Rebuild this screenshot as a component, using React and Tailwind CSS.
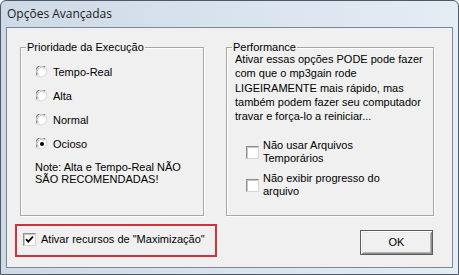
import React from 'react'

function Radio({ checked }) {
  return (
    <svg width="12" height="12" viewBox="0 0 12 12" className="shrink-0">
      <circle cx="6" cy="6" r="5.5" fill="#ffffff" />
      <path d="M1.4 9.3 A5.3 5.3 0 0 1 9.3 1.4" fill="none" stroke="#7a7a7a" strokeWidth="1.1" />
      <path d="M9.3 1.4 A5.3 5.3 0 0 1 1.4 9.3" fill="none" stroke="#d8d8d8" strokeWidth="1.1" />
      <path d="M2.5 8.2 A4 4 0 0 1 8.2 2.5" fill="none" stroke="#bdbdbd" strokeWidth="1" />
      {checked && <circle cx="6" cy="6" r="2" fill="#000000" />}
    </svg>
  )
}

function Checkbox({ checked }) {
  return (
    <div className="w-[13px] h-[13px] shrink-0 bg-white border border-t-[#8e8e8e] border-l-[#8e8e8e] border-r-[#d4d4d4] border-b-[#d4d4d4] shadow-[inset_1px_1px_0_#c8c8c8] flex items-center justify-center">
      {checked && (
        <svg width="9" height="9" viewBox="0 0 9 9">
          <path d="M1 4.2 L3.3 6.6 L8 1.6" fill="none" stroke="#000" strokeWidth="1.8" />
        </svg>
      )}
    </div>
  )
}

function GroupBox({ title, className, children }) {
  return (
    <div className={`relative border border-[#a6a6a6] shadow-[1px_1px_0_#ffffff,inset_1px_1px_0_#ffffff] ${className}`}>
      <span className="absolute -top-[7px] left-[5px] bg-[#f0f0f0] px-[1px] leading-[12px]">{title}</span>
      {children}
    </div>
  )
}

export default function App() {
  const priorities = [
    { label: 'Tempo-Real', checked: false },
    { label: 'Alta', checked: false },
    { label: 'Normal', checked: false },
    { label: 'Ocioso', checked: true },
  ]

  return (
    <div className="w-[459px] h-[275px] flex flex-col rounded-t-[6px] border border-[#4f5865] bg-gradient-to-r from-[#cdd9e6] via-[#d9e3ee] to-[#e4ecf4] text-[11px] text-black font-['Liberation_Sans',sans-serif]">
      {/* Title bar */}
      <div className="h-[26px] shrink-0 pl-[6px] flex items-center text-[12px] text-[#1b1b1b] font-['Open_Sans',sans-serif]">
        Opções Avançadas
      </div>

      {/* Client area */}
      <div className="flex-1 mx-[5px] mb-[6px] border border-[#7d8894] bg-[#f0f0f0] flex flex-col">
        <div className="flex pl-[13px] pt-[19px] gap-[22px]">
          <GroupBox title="Prioridade da Execução" className="w-[184px] h-[169px]">
            <div className="flex flex-col pt-[12px] pl-[15px]">
              {priorities.map((p) => (
                <div key={p.label} className="h-[24px] flex items-center gap-[5px]">
                  <Radio checked={p.checked} />
                  <span>{p.label}</span>
                </div>
              ))}
            </div>
            <p className="pl-[14px] mt-[5px] leading-[12px]">
              Note: Alta e Tempo-Real NÃO
              <br />
              SÃO RECOMENDADAS!
            </p>
          </GroupBox>

          <GroupBox title="Performance" className="w-[208px] h-[169px]">
            <p className="pl-[8px] pt-[4px] leading-[14.3px] whitespace-nowrap">
              Ativar essas opções PODE pode fazer
              <br />
              com que o mp3gain rode
              <br />
              LIGEIRAMENTE mais rápido, mas
              <br />
              também podem fazer seu computador
              <br />
              travar e força-lo a reiniciar...
            </p>
            <div className="flex flex-col gap-[7px] pl-[19px] mt-[16px]">
              <div className="flex items-center gap-[4px]">
                <Checkbox checked={false} />
                <span className="leading-[13px]">
                  Não usar Arquivos
                  <br />
                  Temporários
                </span>
              </div>
              <div className="flex items-center gap-[4px]">
                <Checkbox checked={false} />
                <span className="leading-[13px]">
                  Não exibir progresso do
                  <br />
                  arquivo
                </span>
              </div>
            </div>
          </GroupBox>
        </div>

        <div className="flex items-start pl-[8px] mt-[8px]">
          <div className="w-[202px] h-[33px] border-2 border-[#d2303c] flex items-center pl-[6px] gap-[5px] pb-[2px]">
            <Checkbox checked={true} />
            <span>Ativar recursos de "Maximização"</span>
          </div>
          <button className="ml-auto mr-[19px] mt-[6px] w-[73px] h-[25px] border border-[#5c5c5c] bg-[#f0f0f0] shadow-[inset_1px_1px_0_#ffffff,inset_-1px_-1px_0_#8c8c8c,inset_2px_2px_0_#e8e8e8,inset_-2px_-2px_0_#b5b5b5] flex items-center justify-center text-[11px]">
            OK
          </button>
        </div>
      </div>
    </div>
  )
}
